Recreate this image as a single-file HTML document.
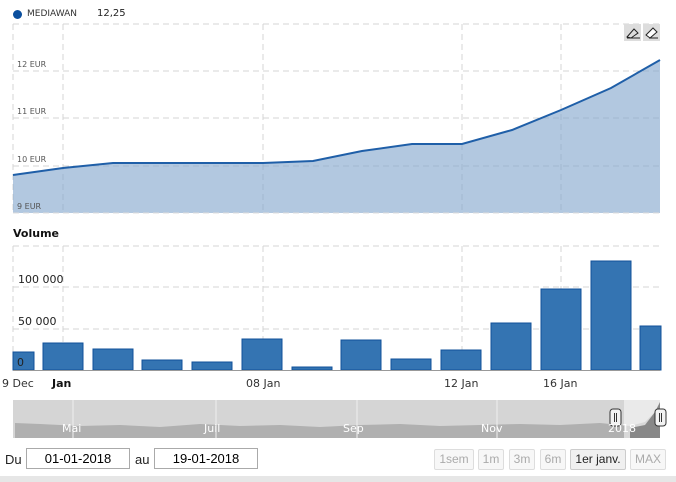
<!DOCTYPE html>
<html><head><style>
body{margin:0;width:676px;height:482px;background:#fff;font-family:"DejaVu Sans","Liberation Sans",sans-serif;overflow:hidden;position:relative}
.t{position:absolute;white-space:nowrap}
.inp{position:absolute;border:1px solid #aaa;height:19px;font-size:13px;text-align:center;line-height:19px;font-family:"Liberation Sans",sans-serif}
.btn{position:absolute;top:449px;height:19px;border:1px solid #ddd;background:#f7f7f7;color:#aaa;font-size:12px;line-height:19px;text-align:center;font-family:"Liberation Sans",sans-serif;border-radius:2px}
</style></head><body>
<svg width="676" height="482" style="position:absolute;left:0;top:0">
<g stroke="#d4d4d4" stroke-dasharray="6,4" stroke-width="1" fill="none">
<line x1="13" y1="24" x2="660" y2="24"/><line x1="13" y1="71" x2="660" y2="71"/><line x1="13" y1="118" x2="660" y2="118"/><line x1="13" y1="166" x2="660" y2="166"/>
<line x1="13" y1="24" x2="13" y2="213"/><line x1="63" y1="24" x2="63" y2="213"/><line x1="263" y1="24" x2="263" y2="213"/><line x1="462" y1="24" x2="462" y2="213"/><line x1="561" y1="24" x2="561" y2="213"/>
<line x1="13" y1="246" x2="660" y2="246"/><line x1="13" y1="287" x2="660" y2="287"/><line x1="13" y1="329" x2="660" y2="329"/>
<line x1="13" y1="246" x2="13" y2="370"/><line x1="63" y1="246" x2="63" y2="370"/><line x1="263" y1="246" x2="263" y2="370"/><line x1="462" y1="246" x2="462" y2="370"/><line x1="561" y1="246" x2="561" y2="370"/>
</g>
<path d="M13,175 L63,168 L113,163 L263,163 L313,161 L362,151 L412,144 L462,144 L512,130 L561,110 L611,88 L660,60 L660,213 L13,213 Z" fill="#7fa3cc" fill-opacity="0.6"/>
<path d="M13,175 L63,168 L113,163 L263,163 L313,161 L362,151 L412,144 L462,144 L512,130 L561,110 L611,88 L660,60" fill="none" stroke="#1f5fa8" stroke-width="2"/>
<line x1="13" y1="213" x2="660" y2="213" stroke="#ddd" stroke-dasharray="6,4"/>
<g fill="#3474b2" stroke="#10509a" stroke-width="1">
<rect x="13" y="352" width="21" height="18"/><rect x="43" y="343" width="40" height="27"/><rect x="93" y="349" width="40" height="21"/><rect x="142" y="360" width="40" height="10"/><rect x="192" y="362" width="40" height="8"/><rect x="242" y="339" width="40" height="31"/><rect x="292" y="367" width="40" height="3"/><rect x="341" y="340" width="40" height="30"/><rect x="391" y="359" width="40" height="11"/><rect x="441" y="350" width="40" height="20"/><rect x="491" y="323" width="40" height="47"/><rect x="541" y="289" width="40" height="81"/><rect x="591" y="261" width="40" height="109"/><rect x="640" y="326" width="21" height="44"/>
</g>
<line x1="13" y1="370.5" x2="660" y2="370.5" stroke="#999"/>
<rect x="13" y="400" width="647" height="38" fill="#d5d5d5"/>
<path d="M15,438 L15,423 L40,424 L80,426 L120,425 L160,427 L200,424 L240,426 L280,425 L320,427 L360,425 L400,424 L440,426 L480,425 L520,424 L560,425 L600,423 L630,426 L645,422 L655,412 L660,402 L660,438 Z" fill="#b0b0b0"/>
<g stroke="#f0f0f0"><line x1="73" y1="400" x2="73" y2="438"/><line x1="216" y1="400" x2="216" y2="438"/><line x1="357" y1="400" x2="357" y2="438"/><line x1="497" y1="400" x2="497" y2="438"/></g>
<rect x="624" y="400" width="36" height="38" fill="#fff" fill-opacity="0.5"/>
<path d="M630,438 L630,428 L645,425 L655,412 L660,402 L660,438Z" fill="#888"/>
<rect x="610" y="409" width="11" height="17" rx="3" fill="#f2f2f2" stroke="#333"/><line x1="614.5" y1="413" x2="614.5" y2="422" stroke="#333"/><line x1="616.5" y1="413" x2="616.5" y2="422" stroke="#333"/>
<rect x="655" y="409" width="11" height="17" rx="3" fill="#f2f2f2" stroke="#333"/><line x1="659.5" y1="413" x2="659.5" y2="422" stroke="#333"/><line x1="661.5" y1="413" x2="661.5" y2="422" stroke="#333"/>
<circle cx="17.5" cy="14.5" r="4.5" fill="#0b4f9e"/>
<rect x="624" y="24" width="17" height="17" fill="#ddd"/><rect x="643" y="24" width="17" height="17" fill="#ddd"/>
<path d="M627,37 L634,29 L638,33 L631,38 Z M627,38 L640,38" fill="none" stroke="#222" stroke-width="1"/>
<path d="M646,35 L653,28 L657,32 L650,38 Z M649,38 L658,38" fill="#fff" stroke="#222" stroke-width="1"/>
</svg>
<div class="t" style="left:27px;top:9px;font-size:9px;color:#333">MEDIAWAN</div>
<div class="t" style="left:97px;top:8px;font-size:10px;color:#222">12,25</div>
<div class="t" style="left:17px;top:60px;font-size:8px;color:#555">12 EUR</div>
<div class="t" style="left:17px;top:107px;font-size:8px;color:#555">11 EUR</div>
<div class="t" style="left:17px;top:155px;font-size:8px;color:#555">10 EUR</div>
<div class="t" style="left:17px;top:202px;font-size:8px;color:#555">9 EUR</div>
<div class="t" style="left:13px;top:227px;font-size:11px;font-weight:bold;color:#111">Volume</div>
<div class="t" style="left:18px;top:273px;font-size:11px;color:#222">100 000</div>
<div class="t" style="left:18px;top:315px;font-size:11px;color:#222">50 000</div>
<div class="t" style="left:17px;top:356px;font-size:11px;color:#222">0</div>
<div class="t" style="left:2px;top:377px;font-size:11px;color:#333">9 Dec</div>
<div class="t" style="left:52px;top:377px;font-size:11px;font-weight:bold;color:#111">Jan</div>
<div class="t" style="left:246px;top:377px;font-size:11px;color:#333">08 Jan</div>
<div class="t" style="left:444px;top:377px;font-size:11px;color:#333">12 Jan</div>
<div class="t" style="left:543px;top:377px;font-size:11px;color:#333">16 Jan</div>
<div class="t" style="left:62px;top:422px;font-size:11px;color:#fff">Mai</div>
<div class="t" style="left:204px;top:422px;font-size:11px;color:#fff">Juil</div>
<div class="t" style="left:343px;top:422px;font-size:11px;color:#fff">Sep</div>
<div class="t" style="left:481px;top:422px;font-size:11px;color:#fff">Nov</div>
<div class="t" style="left:608px;top:422px;font-size:11px;color:#fff">2018</div>
<div class="t" style="left:5px;top:452px;font-size:13px;color:#222;font-family:'Liberation Sans',sans-serif">Du</div>
<div class="inp" style="left:26px;top:448px;width:102px">01-01-2018</div>
<div class="t" style="left:135px;top:452px;font-size:13px;color:#222;font-family:'Liberation Sans',sans-serif">au</div>
<div class="inp" style="left:154px;top:448px;width:102px">19-01-2018</div>
<div class="btn" style="left:434px;width:38px">1sem</div>
<div class="btn" style="left:478px;width:24px">1m</div>
<div class="btn" style="left:509px;width:24px">3m</div>
<div class="btn" style="left:540px;width:24px">6m</div>
<div class="btn" style="left:570px;width:54px;color:#222;border-color:#ccc;background:#f0f0f0">1er janv.</div>
<div class="btn" style="left:630px;width:34px">MAX</div>
<div style="position:absolute;left:0;top:476px;width:676px;height:6px;background:#e6e6e6"></div>
</body></html>
